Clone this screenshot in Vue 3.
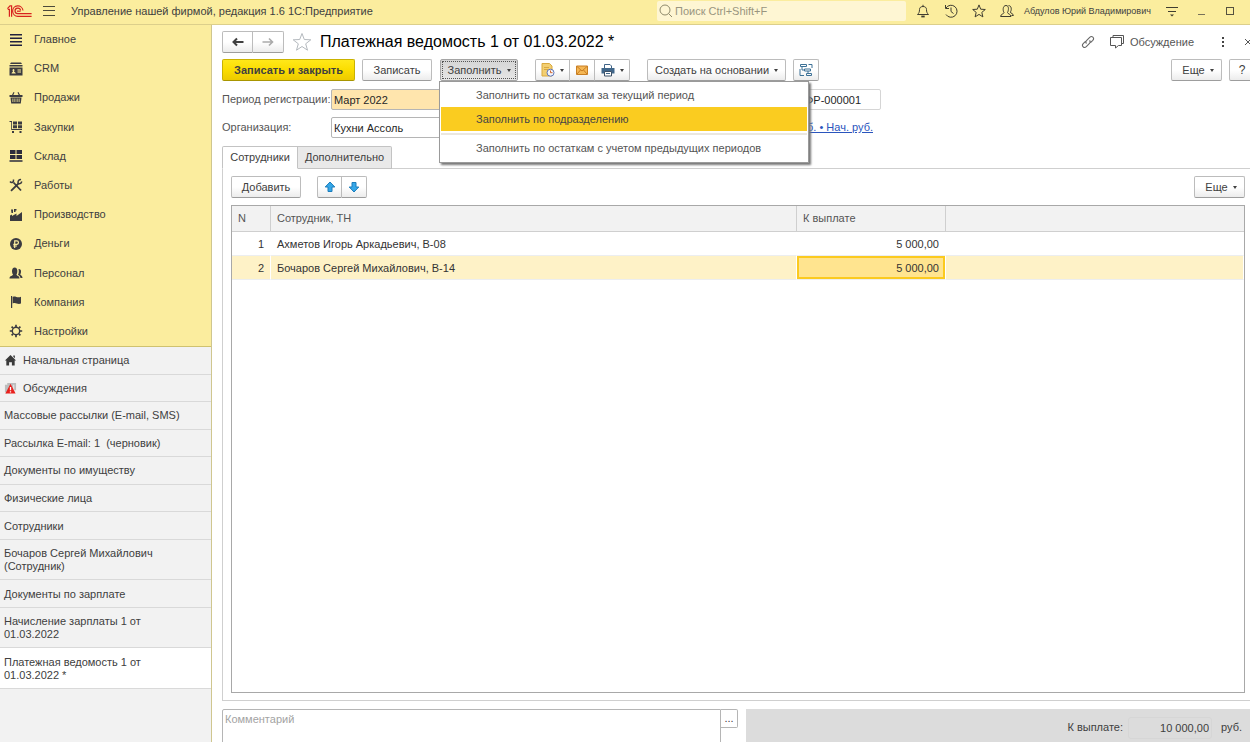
<script setup>
import { ref } from 'vue'

const sections = [
  { id: 'main', label: 'Главное' },
  { id: 'crm', label: 'CRM' },
  { id: 'sales', label: 'Продажи' },
  { id: 'purchases', label: 'Закупки' },
  { id: 'stock', label: 'Склад' },
  { id: 'works', label: 'Работы' },
  { id: 'production', label: 'Производство' },
  { id: 'money', label: 'Деньги' },
  { id: 'staff', label: 'Персонал' },
  { id: 'company', label: 'Компания' },
  { id: 'settings', label: 'Настройки' },
]

const windows = [
  { label: 'Начальная страница', icon: 'home' },
  { label: 'Обсуждения', icon: 'alert' },
  { label: 'Массовые рассылки (E-mail, SMS)' },
  { label: 'Рассылка E-mail: 1\u00a0 (черновик)' },
  { label: 'Документы по имуществу' },
  { label: 'Физические лица' },
  { label: 'Сотрудники' },
  { label: 'Бочаров Сергей Михайлович (Сотрудник)' },
  { label: 'Документы по зарплате' },
  { label: 'Начисление зарплаты 1 от 01.03.2022' },
  { label: 'Платежная ведомость 1 от 01.03.2022 *', active: true },
]

const rows = [
  { n: 1, name: 'Ахметов Игорь Аркадьевич, В-08', sum: '5 000,00' },
  { n: 2, name: 'Бочаров Сергей Михайлович, В-14', sum: '5 000,00' },
]

const selected = ref(2)
const period = ref('Март 2022')
const organization = ref('Кухни Ассоль')
const number = ref('ФР-000001')
const comment = ref('')
const search = ref('')
</script>

<template>
  <div class="app">
    <header class="topbar">
      <svg class="logo" viewBox="0 0 25 12" fill="none" stroke="#d8231f" stroke-width="1.2">
        <path d="M.4 3.600L3 .8H4.600V11.800M.8 4.400H2.400V11.800" />
        <path d="M16 5.500A5.200 5.200 0 1 0 10.800 11.300H24.600" />
        <path d="M13.600 5.500A2.800 2.800 0 1 0 10.800 8.700H24.600" />
        <path d="M10 6.200H13.600" />
      </svg>
      <button class="bare burger" aria-label="Меню">
        <svg viewBox="0 0 12 10" stroke="#4c4a3a" fill="none"><path d="M0 .5H12M0 4.5H12M0 9.5H12" /></svg>
      </button>
      <span class="app-title">Управление нашей фирмой, редакция 1.6 1С:Предприятие</span>
      <label class="search">
        <svg viewBox="0 0 14 14" fill="none" stroke="#8f8a6c" stroke-width="1"><circle cx="6" cy="6" r="5" /><path d="M9.5 9.5L13 13" /></svg>
        <input v-model="search" type="text" placeholder="Поиск Ctrl+Shift+F" aria-label="Поиск" />
      </label>
      <div class="top-icons">
        <button class="bare" aria-label="Уведомления">
          <svg viewBox="0 0 14 14" fill="none" stroke="#3f3d30"><path d="M1.5 10.5H12.5C11 9 10.500 8 10.500 5.500C10.500 3.500 9 2.500 7 2.500S3.500 3.500 3.500 5.500C3.500 8 3 9 1.500 10.500ZM7 2.500V.8" /><path d="M5.300 12.500H8.700" stroke-width="1.800" /></svg>
        </button>
        <button class="bare" aria-label="История">
          <svg viewBox="0 0 14 14" fill="none" stroke="#3f3d30"><path d="M2 4A6 6 0 1 1 2 10.500M1.500 1V4.500H5M7 3.500V7.500L9.500 9.500" /></svg>
        </button>
        <button class="bare" aria-label="Избранное">
          <svg viewBox="0 0 14 14" fill="none" stroke="#3f3d30"><path d="M7 .9L8.700 5.200L13.300 5.500L9.800 8.400L10.900 12.900L7 10.400L3.100 12.900L4.200 8.400L.7 5.500L5.300 5.200Z" /></svg>
        </button>
        <button class="bare" aria-label="Пользователь">
          <svg viewBox="0 0 14 14" fill="none" stroke="#3f3d30"><path d="M.6 12.500C.6 10 4 10 4 8.500C2.800 7 2.500 1.500 6 1.500S8.500 7 7.500 8.500C7.500 10 11 10 11 12.500ZM8.500 1.600C11.800 1.400 11.800 6.500 10.300 8C10.500 9.500 13.400 9.500 13.400 11.500H11.500" /></svg>
        </button>
      </div>
      <span class="user">Абдулов Юрий Владимирович</span>
      <div class="win-icons">
        <button class="bare" aria-label="Настройка панели">
          <svg viewBox="0 0 14 14" fill="none" stroke="#3f3d30"><path d="M1 3.500H13M3 7.500H11" /><path d="M5 10.500H9L7 12.500Z" fill="#3f3d30" stroke="none" /></svg>
        </button>
        <button class="bare" aria-label="Свернуть">
          <svg viewBox="0 0 14 14" fill="none" stroke="#77715a"><path d="M4 10.500H11" /></svg>
        </button>
        <button class="bare" aria-label="Развернуть">
          <svg viewBox="0 0 14 14" fill="none" stroke="#55513f"><rect x="3.500" y="3.500" width="7" height="7" /></svg>
        </button>
      </div>
    </header>

    <div class="body">
      <aside class="sidebar">
        <nav class="sections">
          <a v-for="s in sections" :key="s.id" href="#" class="section">
            <svg viewBox="0 0 14 14" fill="#3b3b40" stroke="none">
              <path v-if="s.id === 'main'" fill="#22223e" d="M1 1H13V2.500H1ZM1 4.500H13V6H1ZM1 8H13V9.500H1ZM1 11.500H13V13H1Z" />
              <template v-else-if="s.id === 'crm'">
                <path d="M2 .5H12L13 2H1ZM.5 3H13.500V4.500H.5ZM.5 5.500H13.500V13.500H.5Z" />
                <path fill="#fbed9e" d="M2.500 11.500C2.500 10 4 10 4 9.500C3.200 8.500 3.500 7 4.500 7S5.800 8.500 5 9.500C5 10 6.800 10 6.800 11.500ZM8.500 7.500H12V8.500H8.500ZM8.500 9.500H12V10.500H8.500Z" />
              </template>
              <path v-else-if="s.id === 'sales'" fill-rule="evenodd" d="M3 4L4.500 1L5.500 1.500L4.300 4H9.700L8.500 1.500L9.500 1L11 4H13.500V6H.5V4ZM1.500 6.500H12.500L11.800 12.500H2.200ZM3.500 7.500V11H4.300V7.500ZM5.500 7.500V11H6.300V7.500ZM7.700 7.500V11H8.500V7.500ZM9.700 7.500V11H10.500V7.500Z" />
              <path v-else-if="s.id === 'purchases'" d="M.5 1H3V9H13V10H2.200V2H.5ZM4 1.500H8V4.500H4ZM9 1.500H13V4.500H9ZM4 5.300H8V8.300H4ZM9 5.300H13V8.300H9ZM3 11H5V13H3ZM10.500 11H12.500V13H10.500Z" />
              <path v-else-if="s.id === 'stock'" fill="#2c2c3c" d="M1 1H6.500V5H1ZM7.500 1H13V5H7.500ZM1 6H6.500V10H1ZM7.500 6H13V10H7.500ZM.5 11.200H13.500V12.700H.5Z" />
              <g v-else-if="s.id === 'works'" fill="none" stroke="#3b3b40">
                <path stroke-width="1.800" d="M4.500 4.500L12 12.500M9.500 5.500L2 12.800" />
                <path stroke-width="1.500" d="M1 3.500C2.500 5.500 5 4.500 4.500 1.500M12.800 3.500C12 6.500 9 6 9 4.200S10.500 1.300 12 1.700" />
              </g>
              <path v-else-if="s.id === 'production'" d="M1 13V7.500L3 6.500V8L7.500 5.500V8L13 4V13ZM2 1.500H4V5H2.500ZM5 1H7.500V2.500H6.500V4H5Z" />
              <template v-else-if="s.id === 'money'">
                <circle cx="7" cy="7" r="6" />
                <path fill="none" stroke="#fbed9e" stroke-width="1.200" d="M5.700 11V3.800H7.800C10 3.800 10 7.300 7.800 7.300H4.300M4.300 9H8" />
              </template>
              <path v-else-if="s.id === 'staff'" d="M.5 12.500C.5 9.500 4 10 4 8.500C2.500 6.500 2.500 1.500 5.700 1.500S8.800 6.500 7.500 8.500C7.500 10 10.500 9.500 10.500 12.500ZM9.500 3C12.800 2.500 12.300 7 11.300 8.300C11.300 9.500 13.500 9.300 13.500 12H11.500C11.300 10 9.500 9.300 9 8.800C10 7 10 5 9.500 3Z" />
              <path v-else-if="s.id === 'company'" d="M2 1H3.200V13H2ZM3.700 2C6.500 .5 8 3.500 12 1.800V8.500C8.500 10 7 7 3.700 8.500Z" />
              <g v-else fill="none" stroke="#3b3b40">
                <circle cx="7" cy="7" r="3.700" stroke-width="1.400" />
                <path stroke-width="1.700" d="M7 .8V3M7 11V13.200M.8 7H3M11 7H13.200M2.600 2.600L4.100 4.100M9.900 9.900L11.400 11.400M11.400 2.600L9.900 4.100M4.100 9.900L2.600 11.400" />
              </g>
            </svg>
            <span>{{ s.label }}</span>
          </a>
        </nav>
        <nav class="windows">
          <a v-for="w in windows" :key="w.label" href="#" class="window" :class="{ active: w.active }">
            <svg v-if="w.icon === 'home'" viewBox="0 0 14 14" fill="#3a3a3a"><path d="M7 1L13 7H11.500V12.500H8.500V9H5.500V12.500H2.500V7H1ZM10 1.500H11.700V4.500L10 3Z" /></svg>
            <svg v-else-if="w.icon === 'alert'" viewBox="0 0 14 14"><path d="M3.500 1H13V9H11V3H3.500ZM1 3H10V11H4L2 13V11H1Z" fill="#bdbdbd" /><path d="M7 2L12.500 12.500H1.500Z" fill="#e8201c" /><path d="M7 5.500V9M7 10V11.300" stroke="#fff" stroke-width="1.400" /></svg>
            <span>{{ w.label }}</span>
          </a>
        </nav>
      </aside>

      <main class="content">
        <div class="title-row">
          <div class="group history">
            <button class="btn" aria-label="Назад"><svg viewBox="0 0 12 10" fill="none" stroke="#404040" stroke-width="2"><path d="M1.500 5H11.500M5 1.500L1.500 5L5 8.500" /></svg></button>
            <button class="btn" aria-label="Вперед"><svg viewBox="0 0 12 10" fill="none" stroke="#aaa" stroke-width="1.600"><path d="M.5 5H10.500M7 1.500L10.500 5L7 8.500" /></svg></button>
          </div>
          <button class="bare fav" aria-label="В избранное"><svg viewBox="0 0 20 20" fill="none" stroke="#b4b9be"><path d="M10 1.500L12.300 7.500L18.800 7.800L13.700 11.800L15.500 18.200L10 14.500L4.500 18.200L6.300 11.800L1.200 7.800L7.700 7.500Z" /></svg></button>
          <h1>Платежная ведомость 1 от 01.03.2022 *</h1>
          <button class="bare link" aria-label="Ссылка"><svg viewBox="0 0 14 14" fill="none" stroke="#666" stroke-width="1.100"><path d="M5.500 8.500C4.500 7.500 4.700 6.500 5.500 5.700L8.700 2.300C10.900.3 13.900 3 11.800 5.300L9.500 7.600M8.500 5.500C9.500 6.500 9.300 7.500 8.500 8.300L5.300 11.700C3.100 13.700.1 11 2.200 8.700L4.500 6.400" /></svg></button>
          <button class="bare discuss"><svg viewBox="0 0 14 14" fill="none" stroke="#555"><path d="M3 2.500V.5H13.500V8.500H12M.5 2.500H11.500V10.500H8.500L5.500 13V10.500H.5Z" /></svg>Обсуждение</button>
          <button class="bare dots" aria-label="Еще"><svg viewBox="0 0 4 12" fill="#444"><path d="M1 1H3V3H1ZM1 5H3V7H1ZM1 9H3V11H1Z" /></svg></button>
          <button class="bare close" aria-label="Закрыть"><svg viewBox="0 0 8 8" fill="none" stroke="#555"><path d="M1 1L7 7M7 1L1 7" /></svg></button>
        </div>

        <div class="toolbar">
          <button class="btn primary">Записать и закрыть</button>
          <button class="btn save">Записать</button>
          <div class="dropdown">
            <button class="btn open fill">Заполнить<i class="caret"></i></button>
            <div class="menu" role="menu">
              <button role="menuitem">Заполнить по остаткам за текущий период</button>
              <button role="menuitem" class="hover">Заполнить по подразделению</button>
              <hr />
              <button role="menuitem">Заполнить по остаткам с учетом предыдущих периодов</button>
            </div>
          </div>
          <div class="group files">
            <button class="btn wide" aria-label="Отчеты">
              <svg viewBox="0 0 14 14"><path d="M1 .5H8.500L11 3V13H1Z" fill="#f3cf72" stroke="#d9a93f" /><path d="M3 4.500H8M3 6.500H7" stroke="#d9a93f" /><circle cx="9.500" cy="9.700" r="3.500" fill="#f4f6fc" stroke="#6076b8" /><path d="M9.500 7.500V9.700H11.500" stroke="#d0662c" fill="none" /></svg><i class="caret"></i>
            </button>
            <button class="btn" aria-label="Письмо"><svg viewBox="0 0 14 14"><path d="M1.500 3H12.500V11.500H1.500Z" fill="#f5b755" stroke="#c97f24" /><path d="M2 3.500L7 8L12 3.500M2 11L5.500 7M12 11L8.500 7" fill="none" stroke="#c97f24" /></svg></button>
            <button class="btn wide" aria-label="Печать">
              <svg viewBox="0 0 14 14"><path d="M3.500 5V1.500H9L10.500 3V5" fill="#fff" stroke="#3f6387" /><path d="M.5 5H13.500V10.500H.5Z" fill="#41678a" /><path d="M3.500 8.500H10.500V13H3.500Z" fill="#fff" stroke="#3f5268" /><path d="M5 10.500H9" stroke="#41678a" /></svg><i class="caret"></i>
            </button>
          </div>
          <button class="btn base">Создать на основании<i class="caret"></i></button>
          <button class="btn tree" aria-label="Структура"><svg viewBox="0 0 14 14" fill="none" stroke="#3c7196"><path d="M1.500 1.500H7.500V3.500H1.500ZM5.500 6H11.500V8H5.500ZM7.500 10.500H12.500V12.500H7.500ZM3 4V7H5.500M9 8V10.500M9.500 1.500H13V5M1 6V12.500H5" /></svg></button>
          <span class="spacer"></span>
          <button class="btn more">Еще<i class="caret"></i></button>
          <button class="btn help">?</button>
        </div>

        <div class="form">
          <label for="period">Период регистрации:</label>
          <input id="period" v-model="period" class="field required" type="text" />
          <input v-model="number" class="field number" type="text" aria-label="Номер" />
          <label for="org">Организация:</label>
          <input id="org" v-model="organization" class="field" type="text" />
          <a href="#" class="currency">руб. • Нач. руб.</a>
        </div>

        <div class="tabs" role="tablist">
          <button class="tab current" role="tab" aria-selected="true">Сотрудники</button>
          <button class="tab" role="tab" aria-selected="false">Дополнительно</button>
        </div>

        <section class="panel">
          <div class="panel-bar">
            <button class="btn add">Добавить</button>
            <div class="group arrows">
              <button class="btn" aria-label="Вверх"><svg viewBox="0 0 12 12" fill="#35a7e8" stroke="#1c7dbb"><path d="M6 1L10.800 6H8V10.500H4V6H1.200Z" /></svg></button>
              <button class="btn" aria-label="Вниз"><svg viewBox="0 0 12 12" fill="#35a7e8" stroke="#1c7dbb"><path d="M6 11L10.800 6H8V1.500H4V6H1.200Z" /></svg></button>
            </div>
            <span class="spacer"></span>
            <button class="btn more">Еще<i class="caret"></i></button>
          </div>
          <div class="grid">
            <table>
              <colgroup><col class="c-n" /><col class="c-name" /><col class="c-sum" /><col /></colgroup>
              <thead>
                <tr><th>N</th><th>Сотрудник, ТН</th><th>К выплате</th><th></th></tr>
              </thead>
              <tbody>
                <tr v-for="r in rows" :key="r.n" :class="{ selected: r.n === selected }" @click="selected = r.n">
                  <td class="num">{{ r.n }}</td>
                  <td>{{ r.name }}</td>
                  <td class="num sum">{{ r.sum }}</td>
                  <td></td>
                </tr>
              </tbody>
            </table>
          </div>
        </section>

        <footer class="footer">
          <div class="comment">
            <textarea v-model="comment" placeholder="Комментарий" aria-label="Комментарий"></textarea>
            <button class="dots-btn" aria-label="Открыть комментарий">...</button>
          </div>
          <div class="total">
            <label for="total">К выплате:</label>
            <input id="total" type="text" value="10 000,00" readonly />
            <span>руб.</span>
          </div>
        </footer>
      </main>
    </div>
  </div>
</template>

<style>
body {
  margin: 0;
  overflow: hidden;
}
</style>

<style scoped>
.app {
  display: flex;
  flex-direction: column;
  height: 100vh;
  overflow: hidden;
  background: #fff;
  color: #404040;
  font: 11px/13px "Liberation Sans", Arial, sans-serif;
}
.app *,
.app *::before {
  box-sizing: border-box;
}
button,
input,
textarea {
  font: inherit;
  color: inherit;
  margin: 0;
}
a {
  color: inherit;
  text-decoration: none;
}
svg {
  display: block;
  flex: none;
  width: 14px;
  height: 14px;
}
.bare {
  display: flex;
  align-items: center;
  justify-content: center;
  padding: 0;
  border: 0;
  background: none;
}
.spacer {
  flex: 1;
}

/* Top bar */
.topbar {
  display: flex;
  align-items: center;
  flex: none;
  height: 25px;
  padding: 0 13px 2px 7px;
  background: #fbed9e;
  border-bottom: 1px solid #dccf8b;
}
.logo {
  width: 25px;
  height: 12px;
}
.burger {
  margin-left: 11px;
}
.burger svg {
  width: 12px;
  height: 10px;
}
.app-title {
  flex: 1;
  margin-left: 16px;
}
.search {
  display: flex;
  align-items: center;
  width: 249px;
  height: 20px;
  padding-left: 2px;
  border-radius: 2px;
  background: #fef6d3;
}
.search input {
  flex: 1;
  min-width: 0;
  padding: 0 2px;
  border: 0;
  outline: 0;
  background: none;
}
.search input::placeholder {
  color: #99957f;
}
.top-icons {
  display: flex;
  gap: 14px;
  margin-left: 10px;
}
.user {
  width: 130px;
  margin-left: 10px;
  font-size: 9px;
  white-space: nowrap;
}
.win-icons {
  display: flex;
  gap: 15px;
  margin-left: 11px;
}

/* Sidebar */
.body {
  display: flex;
  flex: 1;
  min-height: 0;
}
.sidebar {
  display: flex;
  flex-direction: column;
  flex: none;
  width: 212px;
  border-right: 1px solid #cfc68f;
  background: #f2f2f2;
}
.sections {
  display: grid;
  grid-auto-rows: 1fr;
  min-height: 322px;
  background: #fbed9e;
  border-bottom: 1px solid #cfc26f;
}
.section {
  display: flex;
  align-items: center;
  gap: 11px;
  padding-left: 9px;
}
.windows {
  display: flex;
  flex-direction: column;
  min-height: 342px;
}
.window {
  display: flex;
  align-items: center;
  flex: 1 0 auto;
  gap: 6px;
  padding: 7px 50px 6px 4px;
  border-bottom: 1px solid #d9d9d9;
}
.window:nth-child(3),
.window:nth-child(4) {
  padding-right: 10px;
}
.window svg {
  width: 13px;
  height: 13px;
}
.window.active {
  background: #fff;
}

/* Main area */
.content {
  display: flex;
  flex-direction: column;
  flex: 1;
  min-width: 0;
  padding: 6px 0 0 10px;
  overflow: hidden;
}
.btn {
  display: flex;
  align-items: center;
  justify-content: center;
  height: 22px;
  padding: 0;
  border: 1px solid #bcbcbc;
  border-bottom-color: #9d9d9d;
  border-radius: 2px;
  background: linear-gradient(#fff, #fff 50%, #ececec);
  white-space: nowrap;
}
.caret {
  margin-left: 5px;
  border: 2px solid transparent;
  border-top: 3px solid #404040;
  border-bottom: 0;
}
.group {
  display: flex;
}
.group .btn {
  width: 25px;
}
.group .btn + .btn {
  border-left: 0;
  border-top-left-radius: 0;
  border-bottom-left-radius: 0;
}
.group .btn:not(:last-child) {
  border-top-right-radius: 0;
  border-bottom-right-radius: 0;
}
.title-row {
  display: flex;
  align-items: center;
  height: 22px;
}
.history .btn {
  width: 31px;
}
.history svg {
  width: 12px;
  height: 10px;
}
.fav {
  margin-left: 8px;
}
.fav svg {
  width: 20px;
  height: 20px;
}
h1 {
  flex: 1;
  margin: 0 0 0 8px;
  color: #000;
  font-size: 16px;
  font-weight: 400;
  line-height: 20px;
  white-space: nowrap;
}
.discuss {
  gap: 6px;
  margin-left: 15px;
  color: #555;
}
.dots {
  margin-left: 27px;
}
.dots svg {
  width: 4px;
  height: 12px;
}
.close {
  width: 6px;
  margin-left: 19px;
  justify-content: flex-start;
}
.close svg {
  width: 8px;
  height: 8px;
}

.toolbar {
  display: flex;
  margin-top: 6px;
}
.primary {
  width: 133px;
  border-color: #c9b200;
  border-bottom-color: #a89500;
  background: linear-gradient(#ffe81a, #fbdd00 50%, #edca00);
  font-weight: 700;
}
.save {
  width: 70px;
  margin-left: 7px;
}
.dropdown {
  position: relative;
  margin-left: 8px;
}
.fill {
  width: 78px;
}
.open {
  border-color: #a5a5a5;
  background: linear-gradient(#d5d5d5, #e6e6e6);
  outline: 1px dotted #555;
  outline-offset: -3px;
}
.menu {
  position: absolute;
  z-index: 2;
  top: 100%;
  left: -1px;
  width: 370px;
  padding: 1px 1px 2px;
  border: 1px solid #9a9a9a;
  background: #fff;
  box-shadow: 2px 2px 2px #777;
}
.menu button {
  display: block;
  width: 100%;
  height: 24px;
  padding: 0 0 0 35px;
  border: 0;
  background: none;
  text-align: left;
  color: #555;
}
.menu .hover {
  background: #facc20;
  color: #454545;
}
.menu hr {
  margin: 2px 0 1px;
  border: 0;
  border-top: 2px solid #ebe7df;
}
.files {
  margin-left: 17px;
}
.files .wide {
  width: 35px;
}
.base {
  width: 139px;
  margin-left: 17px;
}
.tree {
  width: 26px;
  margin-left: 7px;
}
.more {
  width: 51px;
  padding-left: 3px;
}
.help {
  width: 26px;
  margin: 0 -5px 0 7px;
  font-size: 12px;
}

.form {
  display: grid;
  grid-template-columns: 109px 420px 130px;
  row-gap: 7px;
  align-items: center;
  margin-top: 8px;
}
.form label {
  color: #555;
}
.field {
  width: 100%;
  height: 21px;
  padding: 0 2px;
  border: 1px solid #b5b5b5;
  border-radius: 2px;
  background: #fff;
  color: #262626;
}
.required {
  background: #ffe5ad;
}
.number {
  padding-left: 53px;
  border-color: #d5d5d5;
}
.currency {
  padding-right: 8px;
  color: #2a55bd;
  text-align: right;
  text-decoration: underline;
}

.tabs {
  display: flex;
  z-index: 1;
  margin: 8px 0 -1px;
}
.tab {
  width: 94px;
  height: 23px;
  padding: 0;
  border: 1px solid #c3c3c3;
  border-left: 0;
  background: #e9e9e9;
  border-radius: 0 2px 0 0;
}
.tab.current {
  width: 76px;
  border-left: 1px solid #c3c3c3;
  border-bottom-color: #fff;
  border-radius: 2px 0 0;
  background: #fff;
}
.panel {
  display: flex;
  flex-direction: column;
  flex: 1;
  min-height: 0;
  padding: 7px 5px 7px 8px;
  border: 1px solid #cfcfcf;
  border-right: 0;
}
.panel-bar {
  display: flex;
}
.add {
  width: 70px;
}
.arrows {
  margin-left: 16px;
}
.arrows svg {
  width: 12px;
  height: 12px;
}
.grid {
  flex: 1;
  min-height: 0;
  margin-top: 7px;
  border: 1px solid #a8a8a8;
}
table {
  width: 100%;
  table-layout: fixed;
  border-collapse: separate;
  border-spacing: 0;
}
.c-n {
  width: 39px;
}
.c-name {
  width: 526px;
}
.c-sum {
  width: 149px;
}
th {
  height: 26px;
  padding: 0 6px;
  border-right: 1px solid #cfcfcf;
  border-bottom: 1px solid #cfcfcf;
  background: #f2f2f2;
  color: #555;
  font-weight: 400;
  text-align: left;
}
th:last-child {
  border-right: 0;
}
td {
  height: 24px;
  padding: 2px 6px 0;
  border-right: 1px solid transparent;
  border-bottom: 1px solid #eceef0;
  color: #333;
}
.num {
  text-align: right;
}
.selected td {
  background: #fef2c7;
  border-right-color: #fff;
}
.selected .sum {
  background: #ffe48f;
  box-shadow: inset 0 0 0 2px #fbca1f;
}

.footer {
  display: flex;
  flex: none;
  gap: 8px;
  height: 41px;
  padding-top: 8px;
}
.comment {
  display: flex;
  align-items: flex-start;
  width: 516px;
}
textarea {
  flex: 1;
  height: 40px;
  padding: 3px 2px;
  border: 1px solid #b5b5b5;
  border-radius: 2px 0 0;
  outline: 0;
  resize: none;
}
textarea::placeholder {
  color: #a3a3a3;
}
.dots-btn {
  width: 17px;
  height: 19px;
  padding: 0;
  border: 1px solid #b5b5b5;
  border-left: 0;
  border-radius: 0 2px 2px 0;
  background: #fff;
}
.total {
  display: flex;
  align-items: center;
  justify-content: flex-end;
  flex: 1;
  gap: 5px;
  padding: 4px 8px 0 0;
  background: #dcdcdc;
}
.total input {
  width: 84px;
  height: 22px;
  padding: 0 2px;
  border: 1px solid #d6d6d6;
  border-radius: 3px;
  background: none;
  text-align: right;
}
.total span {
  margin-left: 4px;
}
</style>
